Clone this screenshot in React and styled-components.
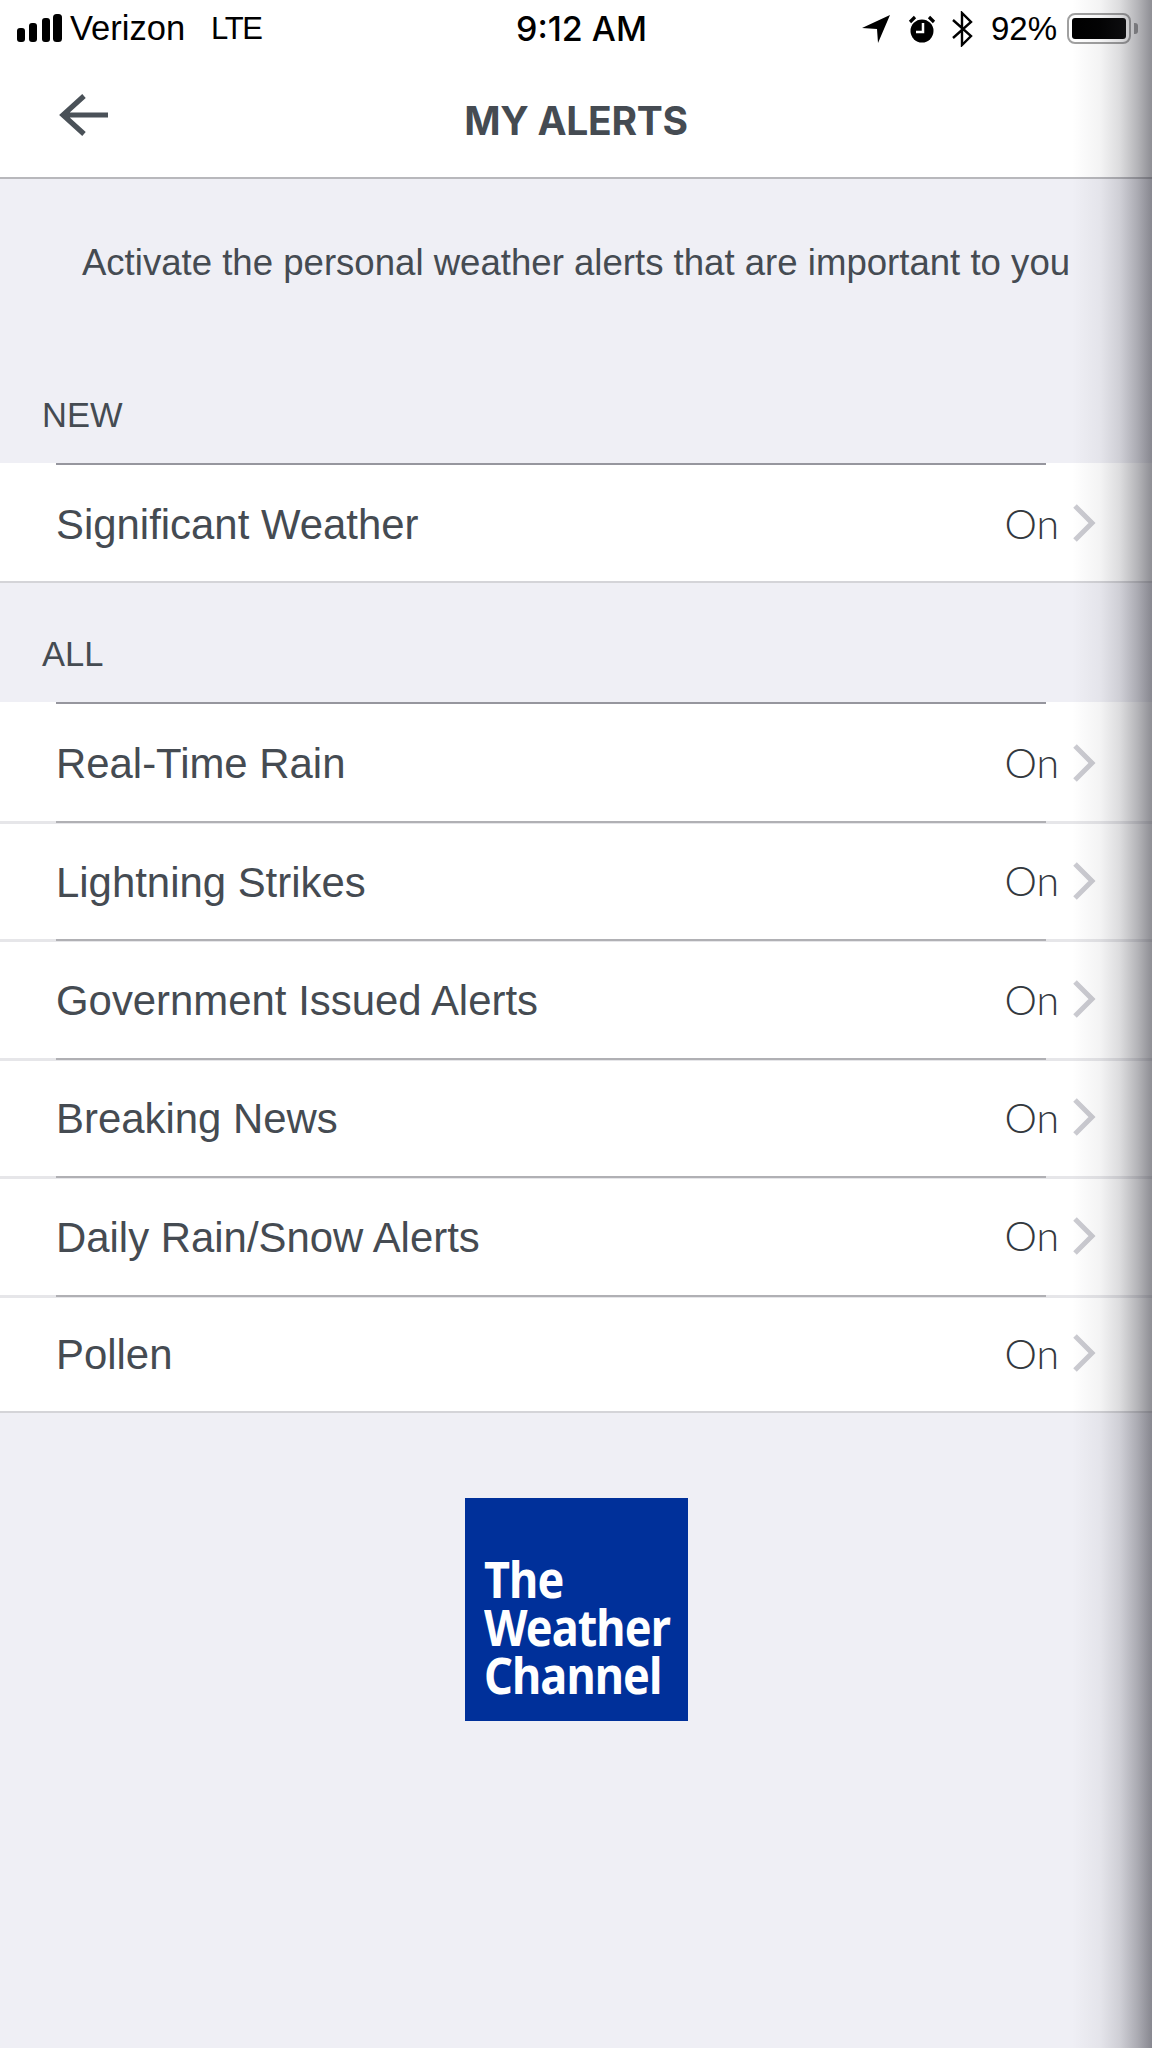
import React from 'react';
import styled, { createGlobalStyle } from 'styled-components';

const GlobalStyle = createGlobalStyle`
  html, body {
    margin: 0;
    padding: 0;
    background: #efeff5;
    font-family: "Liberation Sans", Arial, sans-serif;
  }
`;

const Page = styled.div`
  position: relative;
  width: 1152px;
  height: 2048px;
  overflow: hidden;
  background: #efeff5;
  color: #454b52;
`;

const EdgeShadow = styled.div`
  position: absolute;
  top: 0;
  right: 0;
  bottom: 0;
  width: 80px;
  pointer-events: none;
  background: linear-gradient(
    to right,
    rgba(60, 60, 70, 0) 0%,
    rgba(60, 60, 70, 0.06) 35%,
    rgba(60, 60, 70, 0.18) 60%,
    rgba(60, 60, 70, 0.38) 82%,
    rgba(60, 60, 70, 0.58) 100%
  );
`;

const StatusBar = styled.div`
  display: flex;
  align-items: center;
  justify-content: space-between;
  height: 57px;
  padding: 0 14px 0 17px;
  background: #fff;
  color: #000;
  font-size: 34.5px;
`;

const StatusSide = styled.div`
  display: flex;
  align-items: center;
  width: 340px;
  justify-content: ${({ $end }) => ($end ? 'flex-end' : 'flex-start')};
`;

const Carrier = styled.span`
  margin-left: 8px;
`;

const Network = styled.span`
  margin-left: 26px;
  font-size: 31px;
  letter-spacing: -1.3px;
`;

const Clock = styled.span`
  margin-left: 8px;
  font-weight: 500;
  font-family: Inter, "Liberation Sans", sans-serif;
  font-size: 34px;
`;

const Signal = styled.svg`
  width: 45px;
  height: 30px;
`;

const StatusIcon = styled.svg`
  width: ${({ $w }) => $w}px;
  height: 36px;
  margin-right: ${({ $gap }) => $gap}px;
`;

const Percent = styled.span`
  font-size: 33px;
`;

const Battery = styled.div`
  display: flex;
  align-items: center;
  margin-left: 10px;
`;

const BatteryBody = styled.div`
  box-sizing: border-box;
  width: 64px;
  height: 31px;
  padding: 3px;
  border: 2px solid #a0a0a0;
  border-radius: 8px;
`;

const BatteryFill = styled.div`
  height: 100%;
  background: #000;
  border-radius: 3px;
`;

const BatteryTip = styled.div`
  width: 4px;
  height: 11px;
  margin-left: 3px;
  background: #9a9a9a;
  border-radius: 0 3px 3px 0;
`;

const NavBar = styled.header`
  box-sizing: border-box;
  display: grid;
  grid-template-columns: 1fr auto 1fr;
  align-items: center;
  height: 122px;
  padding-top: 6px;
  background: #fff;
  border-bottom: 2px solid #b8b8bc;
`;

const BackIcon = styled.svg`
  width: 52px;
  height: 44px;
  margin: -11px 0 0 58px;
`;

const Title = styled.h1`
  margin: 0;
  font-family: Inter, "Liberation Sans", sans-serif;
  font-size: 39px;
  font-weight: 700;
  letter-spacing: -0.3px;
  color: #454b52;
`;

const Intro = styled.p`
  margin: 0;
  padding: 64px 0 0;
  height: 110px;
  text-align: center;
  font-size: 36.6px;
  line-height: 40px;
  color: #454b52;
`;

const SectionLabel = styled.div`
  display: flex;
  align-items: flex-end;
  height: ${({ $h }) => $h}px;
  padding: 0 0 29px 42px;
  box-sizing: border-box;
  font-size: 34.5px;
  line-height: 38px;
  color: #454b52;
`;

const List = styled.div`
  background: #fff;
`;

const Row = styled.div`
  position: relative;
  box-sizing: border-box;
  display: flex;
  align-items: center;
  justify-content: space-between;
  height: ${({ $h }) => $h}px;
  padding: 0 56px 0 56px;
  border-top: ${({ $first }) => ($first ? 'none' : '3px solid #e6e6e9')};
  &:last-child {
    border-bottom: 2px solid #d4d4d8;
  }
`;

/* darker inset hairline that sits on top of the row border */
const RowLine = styled.div`
  position: absolute;
  top: ${({ $first }) => ($first ? '0' : '-3px')};
  left: 56px;
  width: 990px;
  height: 2px;
  background: ${({ $first }) => ($first ? '#96969e' : '#b0b0b4')};
`;

const RowLabel = styled.span`
  margin-top: ${({ $first }) => ($first ? '5px' : '2px')};
  font-size: 41.9px;
  color: #454b52;
`;

const RowValue = styled.div`
  display: flex;
  align-items: center;
  margin: ${({ $first }) => ($first ? '2px 0 0' : '0 0 2px')};
`;

const OnText = styled.span`
  font-size: 41px;
  color: #33383d;
  font-weight: 300;
  font-family: Lato, "Liberation Sans", sans-serif;
`;

const Chevron = styled.svg`
  width: 24px;
  height: 40px;
  margin-left: 13px;
`;

const LogoWrap = styled.div`
  display: flex;
  justify-content: center;
  padding-top: 85px;
`;

const Logo = styled.div`
  box-sizing: border-box;
  display: flex;
  flex-direction: column;
  justify-content: flex-end;
  width: 223px;
  height: 223px;
  padding: 0 0 22px 19px;
  background: #00309a;
  color: #fff;
`;

const LogoText = styled.div`
  font-family: "Noto Sans", "Open Sans", sans-serif;
  font-size: 50px;
  font-weight: 700;
  line-height: 48px;
  letter-spacing: -1px;
  white-space: nowrap;
  transform: scaleX(0.9);
  transform-origin: left center;
`;

const alerts = [
  'Real-Time Rain',
  'Lightning Strikes',
  'Government Issued Alerts',
  'Breaking News',
  'Daily Rain/Snow Alerts',
  'Pollen',
];

const AlertRow = ({ label, first, height }) => (
  <Row $first={first} $h={height}>
    <RowLine $first={first} />
    <RowLabel $first={first}>{label}</RowLabel>
    <RowValue $first={first}>
      <OnText>On</OnText>
      <Chevron viewBox="0 0 24 40">
        <path d="M3 3 L20 20 L3 37" stroke="#cbcbd1" strokeWidth="5" fill="none" />
      </Chevron>
    </RowValue>
  </Row>
);

export default function App() {
  return (
    <Page>
      <GlobalStyle />
      <StatusBar>
        <StatusSide>
          <Signal viewBox="0 0 45 30">
            <rect x="0" y="14" width="8" height="14" rx="3" fill="#000" />
            <rect x="12" y="9" width="8" height="19" rx="3" fill="#000" />
            <rect x="25" y="4" width="8" height="24" rx="3" fill="#000" />
            <rect x="36" y="0" width="9" height="28" rx="3.5" fill="#000" />
          </Signal>
          <Carrier>Verizon</Carrier>
          <Network>LTE</Network>
        </StatusSide>
        <Clock>9:12 AM</Clock>
        <StatusSide $end>
          <StatusIcon $w={28} $gap={18} viewBox="0 0 28 36">
            <path d="M0 17 L28 4 L16 32 L15 18 Z" fill="#000" />
          </StatusIcon>
          <StatusIcon $w={28} $gap={15} viewBox="0 0 28 36">
            <circle cx="14" cy="20" r="11.5" fill="#000" />
            <path d="M15 12 V21 H8" stroke="#fff" strokeWidth="2.5" fill="none" />
            <path d="M2 11 L7 6 M26 11 L21 6" stroke="#000" strokeWidth="3.2" />
          </StatusIcon>
          <StatusIcon $w={22} $gap={18} viewBox="0 0 22 36">
            <path d="M2 9 L20 25 L11 34 V2 L20 11 L2 27" stroke="#000" strokeWidth="2.4" fill="none" />
          </StatusIcon>
          <Percent>92%</Percent>
          <Battery>
            <BatteryBody>
              <BatteryFill />
            </BatteryBody>
            <BatteryTip />
          </Battery>
        </StatusSide>
      </StatusBar>

      <NavBar>
        <BackIcon viewBox="0 0 52 44">
          <path d="M26 3 L5 22 L26 41 M5 22 H50" stroke="#4a5158" strokeWidth="5.2" fill="none" />
        </BackIcon>
        <Title>MY ALERTS</Title>
      </NavBar>

      <Intro>Activate the personal weather alerts that are important to you</Intro>

      <SectionLabel $h={110}>NEW</SectionLabel>
      <List>
        <AlertRow label="Significant Weather" first height={120} />
      </List>

      <SectionLabel $h={119}>ALL</SectionLabel>
      <List>
        {alerts.map((a, i) => (
          <AlertRow key={a} label={a} first={i === 0} height={i === 0 ? 119 : 118.4} />
        ))}
      </List>

      <LogoWrap>
        <Logo>
          <LogoText>
            The
            <br />
            Weather
            <br />
            Channel
          </LogoText>
        </Logo>
      </LogoWrap>

      <EdgeShadow />
    </Page>
  );
}
